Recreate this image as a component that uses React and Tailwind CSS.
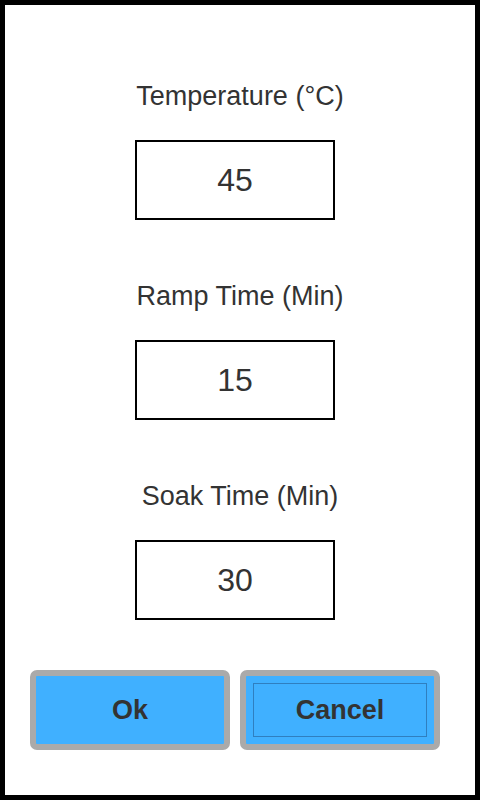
import React from 'react'

const fields = [
  { label: 'Temperature (°C)', value: '45' },
  { label: 'Ramp Time (Min)', value: '15' },
  { label: 'Soak Time (Min)', value: '30' },
]

export default function App() {
  return (
    <div
      className="w-[480px] h-[800px] border-[5px] border-black bg-white text-[#333] flex flex-col items-center"
      style={{ fontFamily: '"Liberation Sans", Arial, sans-serif' }}
    >
      {/* Fields */}
      <div className="flex flex-col items-center pt-[76px]">
        {fields.map((f, i) => (
          <div key={i} className="flex flex-col items-center h-[200px]">
            <div className="text-[27px] leading-[30px] h-[30px]">{f.label}</div>
            <div className="mt-[29px] mr-[10px] w-[200px] h-[80px] border-2 border-black flex items-center justify-center text-[32px] leading-none">
              {f.value}
            </div>
          </div>
        ))}
      </div>

      {/* Buttons */}
      <div className="flex gap-[10px] mt-[-11px] mr-[10px]">
        <button className="w-[200px] h-[80px] rounded-[7px] border-[6px] border-[#aaaaaa] bg-[#40b0ff] text-[27px] font-bold text-[#333]">
          Ok
        </button>
        <button className="relative w-[200px] h-[80px] rounded-[7px] border-[6px] border-[#aaaaaa] bg-[#40b0ff] text-[27px] font-bold text-[#333]">
          <span className="absolute inset-[7px] border border-[#2f7fc0]" />
          <span className="relative">Cancel</span>
        </button>
      </div>
    </div>
  )
}
